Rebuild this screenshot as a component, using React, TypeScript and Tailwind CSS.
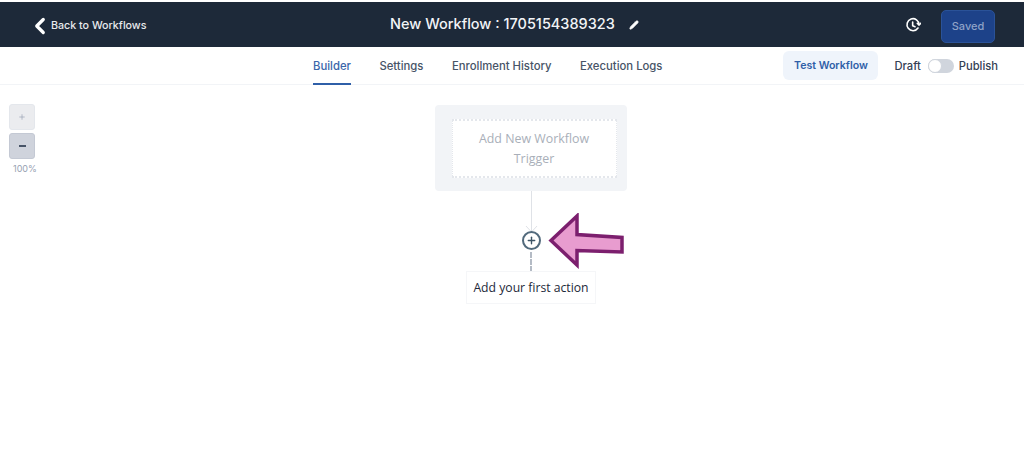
import React from 'react';
import { ChevronLeft, Pencil, Plus } from 'lucide-react';

const tabs = ['Settings', 'Enrollment History', 'Execution Logs'];

export default function App() {
  return (
    <div className="w-[1024px] h-[471px] overflow-hidden bg-white font-['Inter',sans-serif] flex flex-col">
      {/* Top bar */}
      <header className="mt-[2px] h-[45px] bg-[#1d2939] text-white flex items-center shrink-0 pt-[3px] pl-[27px] pr-[29px]">
        <div className="w-[348px] flex items-center">
          <ChevronLeft className="w-[26px] h-[26px] mr-[-2px]" strokeWidth={3} />
          <span className="text-[10.7px] font-medium text-[#e8eaed]">Back to Workflows</span>
        </div>
        <div className="flex items-center">
          <h1 className="text-[14.5px] font-medium leading-none text-[#f2f4f7] mt-[-3px] ml-[15px]">New Workflow : 1705154389323</h1>
          <Pencil className="w-[10px] h-[10px] ml-[14px] mt-[-3px] text-white" fill="currentColor" strokeWidth={2} />
        </div>
        <div className="ml-auto flex items-center gap-[20px]">
          <svg className="w-[16px] h-[16px] mt-[-3px]" viewBox="0 0 24 24" fill="none" stroke="currentColor" strokeWidth="2.4" strokeLinecap="round" strokeLinejoin="round">
            <path d="M19.5 16.5A9 9 0 1 1 21 11.5" />
            <path d="M18.5 9.5l2.5 2.5 2.5-2.5" />
            <path d="M11.5 7.5v5.5l3.5 1.5" />
          </svg>
          <button className="w-[54px] h-[33px] rounded-[5px] bg-[#1d4289] border border-[#2a5298] text-[11px] font-medium text-[#8fa3c7]">Saved</button>
        </div>
      </header>

      {/* Tabs row */}
      <nav className="h-[38px] border-b border-[#f2f4f7] flex items-stretch shrink-0 pl-[313px] pr-[26px]">
        <div className="flex gap-[28.5px] text-[11.3px] font-medium text-[#475467]">
          <div className="border-b-2 border-[#2f5fa8] text-[#3a66aa] pt-[11px] mb-[-1px]">Builder</div>
          {tabs.map((t) => (
            <div key={t} className="pt-[11px]">{t}</div>
          ))}
        </div>
        <div className="ml-auto flex items-center text-[11.2px] font-medium pt-[1px]">
          <button className="w-[95px] h-[29px] mt-[-1px] rounded-[6px] bg-[#eff4fb] text-[#2f5fa8] text-[10.6px] font-semibold">Test Workflow</button>
          <span className="ml-[16px] text-[#344054]">Draft</span>
          <div className="ml-[7px] w-[26px] h-[14px] rounded-full bg-[#d0d5dd] relative">
            <div className="absolute left-0 top-0 w-[14px] h-[14px] rounded-full bg-white border border-[#d0d5dd]" />
          </div>
          <span className="ml-[5px] text-[#344054]">Publish</span>
        </div>
      </nav>

      {/* Canvas */}
      <main className="relative flex-1">
        {/* Zoom controls */}
        <div className="absolute left-[9px] top-[19px] w-[27px] flex flex-col items-start">
          <button className="w-[26px] h-[26px] rounded-[3px] bg-[#ebecef] border border-[#e4e7ec] flex items-center justify-center">
            <Plus className="w-[8px] h-[8px] text-[#98a2b3]" strokeWidth={2} />
          </button>
          <button className="mt-[3px] w-[26px] h-[26px] rounded-[3px] bg-[#cfd3dc] border border-[#c4c9d4] flex items-center justify-center">
            <span className="block w-[7px] h-[2px] bg-[#475467]" />
          </button>
          <span className="mt-[4px] ml-[4px] text-[9px] text-[#98a2b3] leading-[12px]">100%</span>
        </div>

        {/* Trigger node */}
        <div className="absolute left-[435px] top-[20px] w-[192px] h-[86px] rounded-[4px] bg-[#f2f4f7] flex items-center justify-center">
          <div className="w-[165px] h-[59px] ml-[6px] bg-white border-y-2 border-x border-dotted border-[#e4e7ec] flex items-center justify-center text-center font-['Open_Sans',sans-serif] text-[12.4px] leading-[20px] pt-[2px] text-[#a9afb9]">
            Add New Workflow<br />Trigger
          </div>
        </div>

        {/* Connector, plus button, label */}
        <div className="absolute left-[531px] top-[106px] w-px h-[42px] bg-[#dfe2e7]" />
        <svg className="absolute left-[525px] top-[140px]" width="13" height="8" viewBox="0 0 13 8" fill="none">
          <path d="M1 1l5.5 6L12 1" stroke="#dfe2e7" strokeWidth="1" />
        </svg>
        <div className="absolute left-[522px] top-[146px] w-[19px] h-[19px] rounded-full border-2 border-[#526a7c] bg-white flex items-center justify-center">
          <Plus className="w-[11px] h-[11px] text-[#3d5466]" strokeWidth={3} />
        </div>
        <div className="absolute left-[530px] top-[167px] h-[20px] border-l-2 border-dashed border-[#b4bbc5]" />
        <div className="absolute left-[466px] top-[186px] w-[130px] h-[33px] border border-[#f5f6f8] bg-white flex items-center justify-center font-['Open_Sans',sans-serif] pt-[2px] text-[12.2px] text-[#1d2939]">
          Add your first action
        </div>

        {/* Annotation arrow */}
        <svg className="absolute left-[548px] top-[128px]" width="78" height="56" viewBox="0 0 78 56" fill="none">
          <path d="M3 27.5L29 3v18.5l45 3v14.5l-45-1.5V52z" fill="#e89ccf" stroke="#7c1f6e" strokeWidth="3.5" strokeLinejoin="miter" />
        </svg>
      </main>
    </div>
  );
}
